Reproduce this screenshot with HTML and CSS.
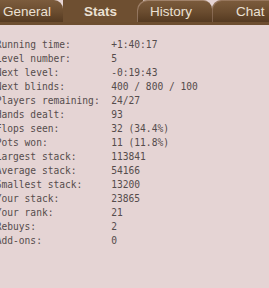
FILE: index.html
```html
<!DOCTYPE html>
<html>
<head>
<meta charset="utf-8">
<link rel="stylesheet" href="styles.css">
</head>
<body>
<div class="tabs">
  <div class="tab tab-general">General</div>
  <div class="tab tab-stats active">Stats</div>
  <div class="tab tab-history">History</div>
  <div class="tab tab-chat">Chat</div>
</div>
<div class="bar"></div>
<div class="stats">
  <span>Running time:</span><span>+1:40:17</span>
  <span>Level number:</span><span>5</span>
  <span>Next level:</span><span>-0:19:43</span>
  <span>Next blinds:</span><span>400 / 800 / 100</span>
  <span>Players remaining:</span><span>24/27</span>
  <span>Hands dealt:</span><span>93</span>
  <span>Flops seen:</span><span>32 (34.4%)</span>
  <span>Pots won:</span><span>11 (11.8%)</span>
  <span>Largest stack:</span><span>113841</span>
  <span>Average stack:</span><span>54166</span>
  <span>Smallest stack:</span><span>13200</span>
  <span>Your stack:</span><span>23865</span>
  <span>Your rank:</span><span>21</span>
  <span>Rebuys:</span><span>2</span>
  <span>Add-ons:</span><span>0</span>
</div>
</body>
</html>
```
FILE: styles.css
```css
html, body {
  margin: 0;
  padding: 0;
}
body {
  background: #e5d4d4;
  width: 269px;
  height: 288px;
  overflow: hidden;
}
.tabs {
  display: flex;
  height: 22px;
  width: 300px;
}
.tab {
  flex: none;
  height: 22px;
  box-sizing: border-box;
  font-family: "Liberation Sans", Arial, sans-serif;
  font-size: 13.5px;
  line-height: 23px;
  color: #ebe0d3;
  background: linear-gradient(#7c5c3d, #6a4c2f 55%, #553a21);
  white-space: nowrap;
  position: relative;
}
.tab-general {
  width: 63px;
  padding-left: 3px;
  border-top-right-radius: 9px;
}
.tab-stats {
  width: 80px;
  padding-left: 21px;
  font-weight: bold;
  background: #6e4f31;
}
.tab-history {
  width: 75px;
  margin-left: -6px;
  padding-left: 13px;
  border-radius: 10px 9px 0 0;
  box-shadow: inset 1px 1px 0 rgba(230, 200, 190, 0.35);
}
.tab-chat {
  width: 90px;
  padding-left: 24px;
  border-top-left-radius: 9px;
  box-shadow: inset 1px 1px 0 rgba(230, 200, 190, 0.25);
}
.bar {
  height: 3px;
  background: #6d4e30;
}
.stats {
  display: grid;
  grid-template-columns: 20ch auto;
  margin: 13px 0 0 -4.3px;
  font-family: "DejaVu Sans Mono", monospace;
  font-size: 9.6px;
  line-height: 14px;
  color: #554c4c;
  white-space: pre;
}
```
